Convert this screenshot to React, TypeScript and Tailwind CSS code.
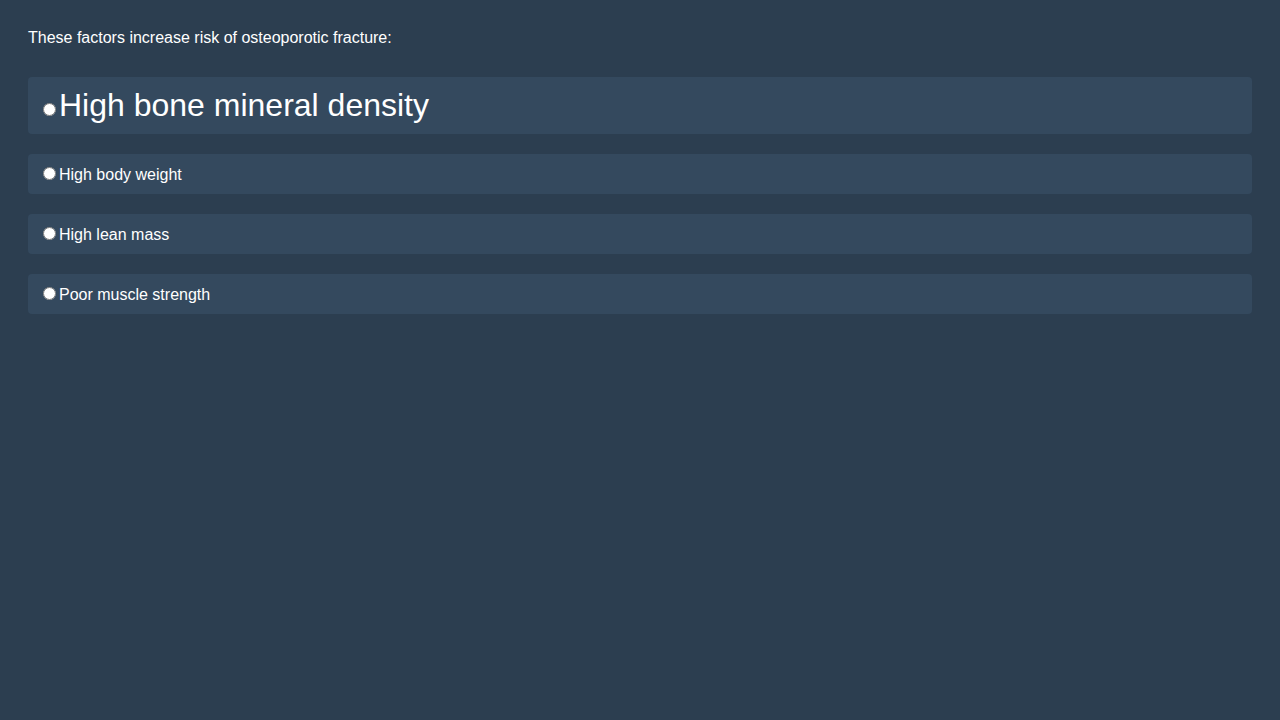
const options = [
  { label: "High bone mineral density", big: true },
  { label: "High body weight", big: false },
  { label: "High lean mass", big: false },
  { label: "Poor muscle strength", big: false },
];

export default function App() {
  return (
    <div className="min-h-screen bg-[#2c3e50] p-[28px] text-white font-['Liberation_Sans',Arial,sans-serif] leading-[normal]">
      <p className="text-[16px] mb-[30px] pt-[1px]">These factors increase risk of osteoporotic fracture:</p>
      <div className="flex flex-col gap-[20px]">
        {options.map((o) => (
          <label
            key={o.label}
            className={`block bg-[#34495e] rounded-[4px] p-[10px] ${o.big ? "text-[32px]" : "text-[16px]"}`}
          >
            <input type="radio" name="answer" className="m-[3px_3px_0_5px]" />
            {o.label}
          </label>
        ))}
      </div>
    </div>
  );
}
